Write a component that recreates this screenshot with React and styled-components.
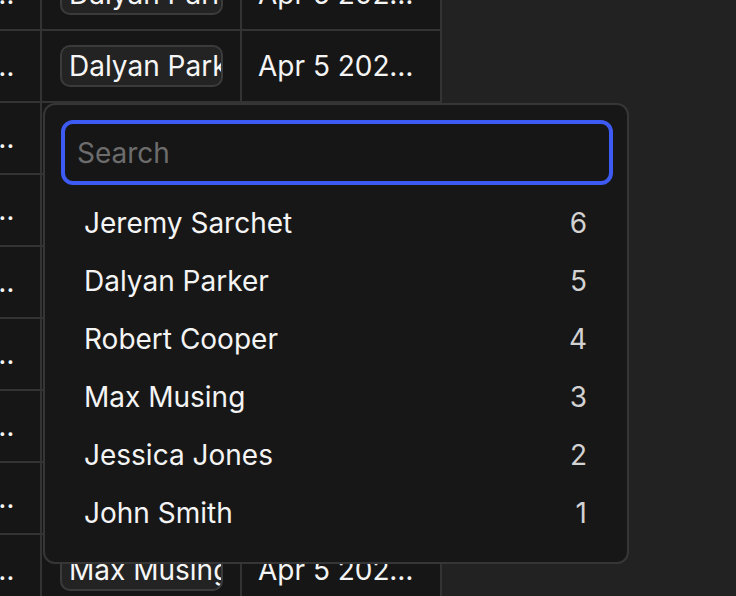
import React from "react";
import styled, { createGlobalStyle } from "styled-components";

const GlobalStyle = createGlobalStyle`
  html, body {
    margin: 0;
    padding: 0;
    background: #222222;
    overflow: hidden;
  }
  body {
    font-family: Inter, "Noto Sans", sans-serif;
    color: #f2f2f2;
    -webkit-font-smoothing: antialiased;
  }
`;

const Page = styled.div`
  width: 736px;
  height: 596px;
  overflow: hidden;
  background: #222222;
`;

const Table = styled.div`
  display: flex;
  flex-direction: column;
  width: 602px;
  margin-left: -160px;
  margin-top: -41px;
  background: #161616;
`;

const Row = styled.div`
  display: grid;
  grid-template-columns: 202px 200px 200px;
  height: 72px;
  box-sizing: border-box;
  border-bottom: 2px solid #333333;
`;

const Cell = styled.div`
  position: relative;
  box-sizing: border-box;
  border-right: 2px solid #333333;
  display: flex;
  align-items: center;
  min-width: 0;
  padding: ${(p) => p.$pad || "0 20px 0 16px"};
  font-size: 28px;
  line-height: 34px;
  color: #f4f4f4;
`;

const Truncate = styled.span`
  display: block;
  min-width: 0;
  white-space: nowrap;
  overflow: hidden;
  text-overflow: ellipsis;
`;

const Tag = styled.span`
  display: block;
  width: 100%;
  height: 42px;
  box-sizing: border-box;
  border: 2px solid #3b3b3b;
  border-radius: 10px;
  background: #232323;
  padding: 0 7px;
  font-size: 28px;
  line-height: 38px;
  color: #f6f6f6;
  white-space: nowrap;
  overflow: hidden;
`;

const Popover = styled.div`
  position: absolute;
  z-index: 10;
  top: calc(100% + 2px);
  left: 1px;
  width: 586px;
  box-sizing: border-box;
  background: #171717;
  border: 2px solid #363636;
  border-radius: 12px;
  padding: 15px 16px 20px 16px;
  display: flex;
  flex-direction: column;
`;

const SearchInput = styled.input`
  width: 552px;
  height: 65px;
  box-sizing: border-box;
  border: 4px solid #3d5af3;
  border-radius: 12px;
  background: #161616;
  color: #f2f2f2;
  caret-color: #ffffff;
  font-family: Inter, "Noto Sans", sans-serif;
  font-size: 28px;
  padding: 0 12px;
  outline: none;

  &::placeholder {
    color: #6c6c6c;
  }
`;

const List = styled.ul`
  list-style: none;
  margin: 9px 0 0 0;
  padding: 0;
  display: flex;
  flex-direction: column;
`;

const Item = styled.li`
  height: 58px;
  display: flex;
  align-items: center;
  justify-content: space-between;
  padding: 0 24px 0 23px;
  font-size: 28px;
  color: #f4f4f4;
`;

const Count = styled.span`
  color: #d2d2d2;
`;

const title = "Fix layout bug in settings page";

const rows = [
  { owner: "Dalyan Parker", date: "Apr 5 2024, 10:30 AM" },
  { owner: "Dalyan Parker", date: "Apr 5 2024, 10:30 AM", open: true },
  { owner: "Jeremy Sarchet", date: "Apr 5 2024, 10:30 AM" },
  { owner: "Robert Cooper", date: "Apr 5 2024, 10:30 AM" },
  { owner: "Jeremy Sarchet", date: "Apr 5 2024, 10:30 AM" },
  { owner: "Jessica Jones", date: "Apr 5 2024, 10:30 AM" },
  { owner: "Robert Cooper", date: "Apr 5 2024, 10:30 AM" },
  { owner: "John Smith", date: "Apr 5 2024, 10:30 AM" },
  { owner: "Max Musing", date: "Apr 5 2024, 10:30 AM" },
];

const people = [
  { name: "Jeremy Sarchet", count: 6 },
  { name: "Dalyan Parker", count: 5 },
  { name: "Robert Cooper", count: 4 },
  { name: "Max Musing", count: 3 },
  { name: "Jessica Jones", count: 2 },
  { name: "John Smith", count: 1 },
];

export default function App() {
  return (
    <Page>
      <GlobalStyle />
      <Table>
        {rows.map((r, i) => (
          <Row key={i}>
            <Cell $pad="0 22px 0 16px">
              <Truncate>{title}</Truncate>
            </Cell>
            <Cell $pad="0 17px 0 18px">
              <Tag>{r.owner}</Tag>
              {r.open && (
                <Popover>
                  <SearchInput placeholder="Search" autoFocus />
                  <List>
                    {people.map((p) => (
                      <Item key={p.name}>
                        <span>{p.name}</span>
                        <Count>{p.count}</Count>
                      </Item>
                    ))}
                  </List>
                </Popover>
              )}
            </Cell>
            <Cell>
              <Truncate>{r.date}</Truncate>
            </Cell>
          </Row>
        ))}
      </Table>
    </Page>
  );
}
